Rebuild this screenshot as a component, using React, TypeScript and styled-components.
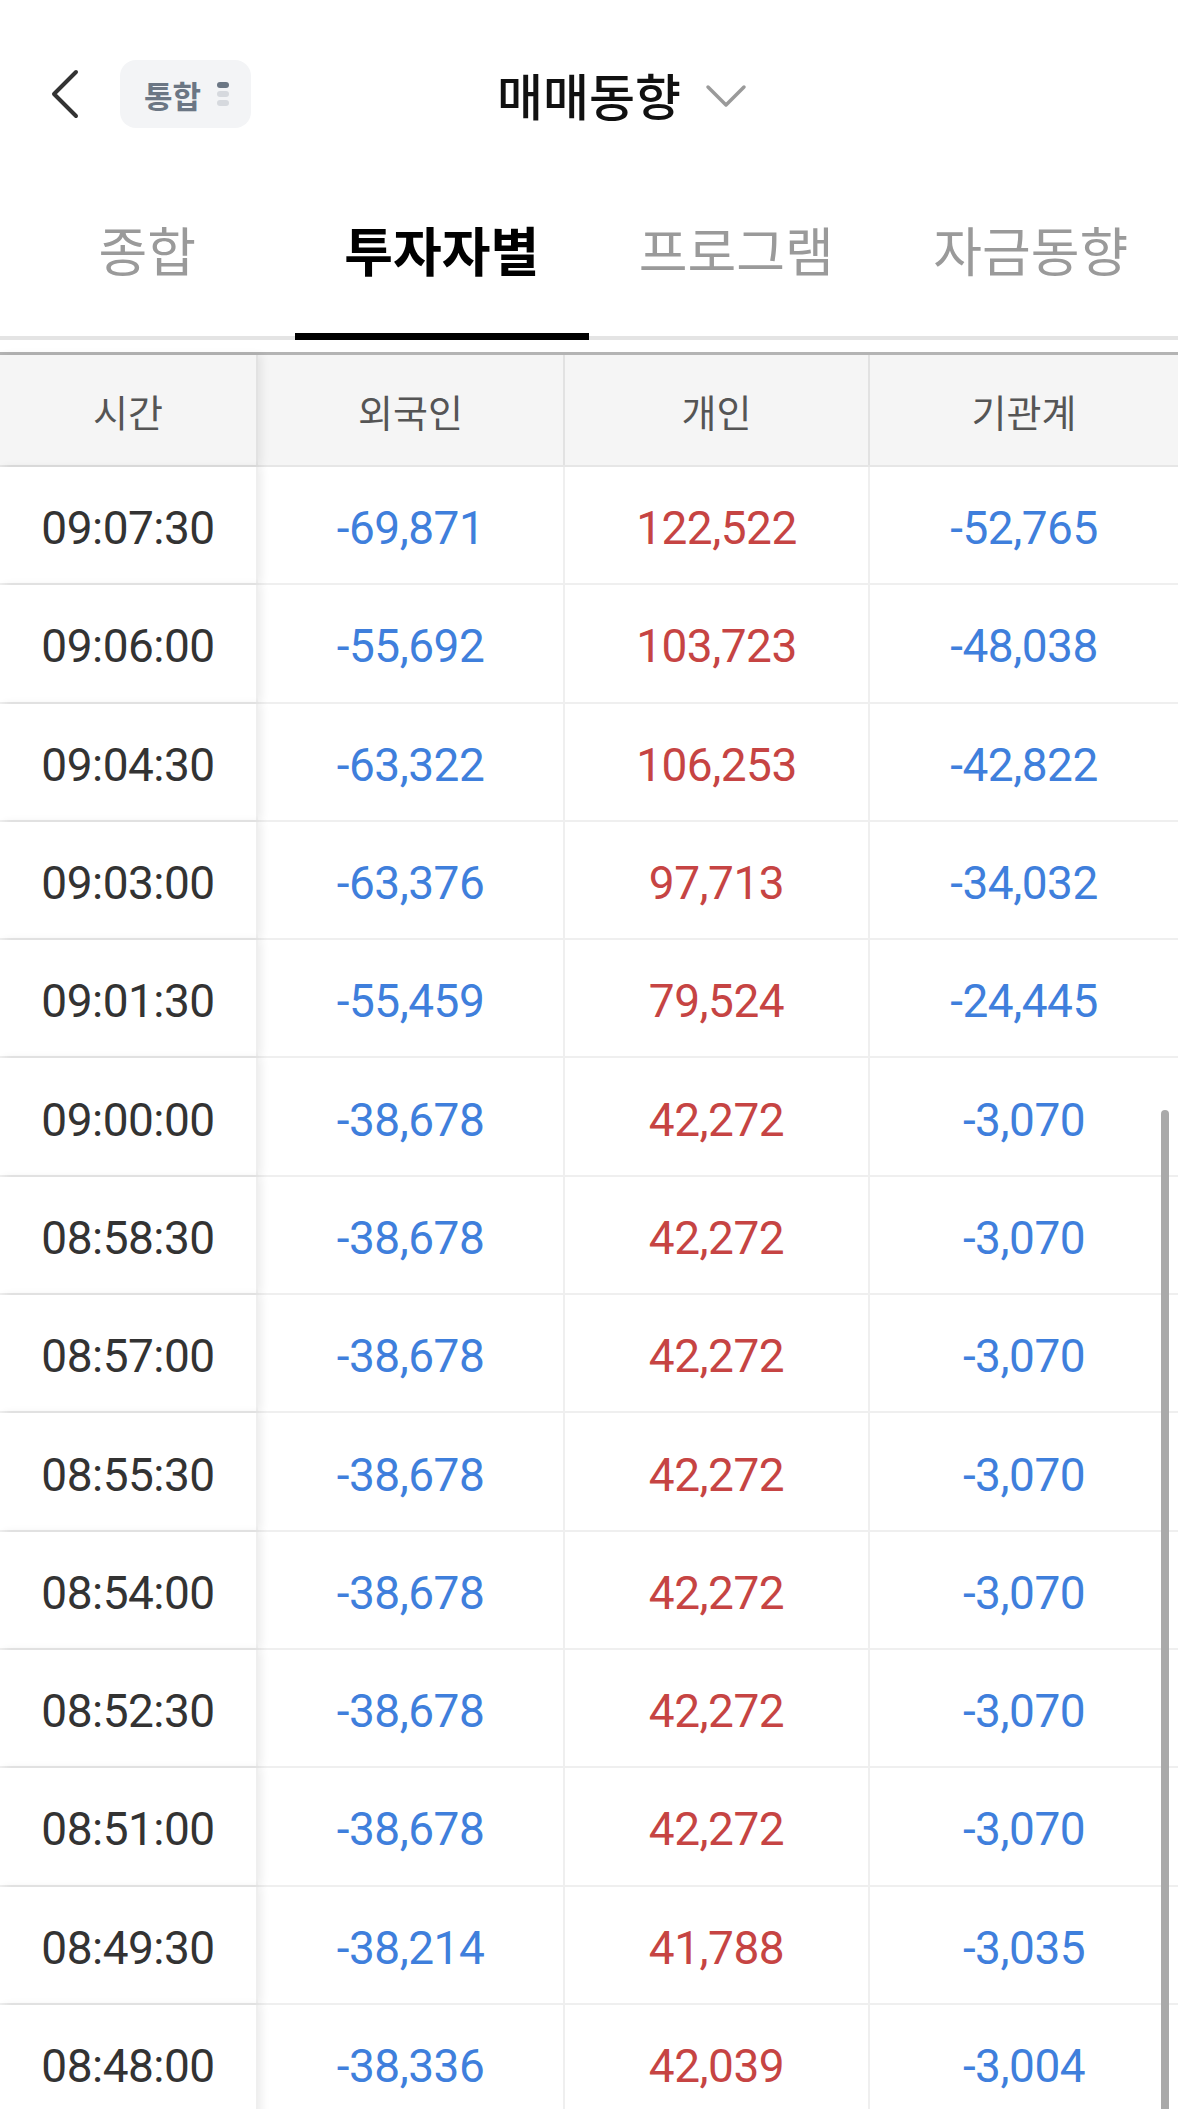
import styled, { createGlobalStyle } from "styled-components";

type Row = {
  time: string;
  foreign: string;
  personal: string;
  institution: string;
};

const rows: Row[] = [
  { time: "09:07:30", foreign: "-69,871", personal: "122,522", institution: "-52,765" },
  { time: "09:06:00", foreign: "-55,692", personal: "103,723", institution: "-48,038" },
  { time: "09:04:30", foreign: "-63,322", personal: "106,253", institution: "-42,822" },
  { time: "09:03:00", foreign: "-63,376", personal: "97,713", institution: "-34,032" },
  { time: "09:01:30", foreign: "-55,459", personal: "79,524", institution: "-24,445" },
  { time: "09:00:00", foreign: "-38,678", personal: "42,272", institution: "-3,070" },
  { time: "08:58:30", foreign: "-38,678", personal: "42,272", institution: "-3,070" },
  { time: "08:57:00", foreign: "-38,678", personal: "42,272", institution: "-3,070" },
  { time: "08:55:30", foreign: "-38,678", personal: "42,272", institution: "-3,070" },
  { time: "08:54:00", foreign: "-38,678", personal: "42,272", institution: "-3,070" },
  { time: "08:52:30", foreign: "-38,678", personal: "42,272", institution: "-3,070" },
  { time: "08:51:00", foreign: "-38,678", personal: "42,272", institution: "-3,070" },
  { time: "08:49:30", foreign: "-38,214", personal: "41,788", institution: "-3,035" },
  { time: "08:48:00", foreign: "-38,336", personal: "42,039", institution: "-3,004" },
];

const tabs = ["종합", "투자자별", "프로그램", "자금동향"];
const columns = ["시간", "외국인", "개인", "기관계"];

const tone = (value: string) => (value.startsWith("-") ? "down" : "up");

export default function App() {
  return (
    <>
      <GlobalStyle />
      <Page>
        <Header>
          <HeaderLeft>
            <BackButton aria-label="뒤로">
              <svg width="30" height="50" viewBox="0 0 30 50">
                <path
                  d="M26 3 L4 25 L26 47"
                  fill="none"
                  stroke="#333"
                  strokeWidth="4"
                  strokeLinecap="round"
                  strokeLinejoin="round"
                />
              </svg>
            </BackButton>
            <Chip>
              통합
              <Dots>
                <Dot $on />
                <Dot />
                <Dot />
              </Dots>
            </Chip>
          </HeaderLeft>
          <Title>매매동향</Title>
          <HeaderRight>
            <svg width="42" height="26" viewBox="0 0 42 26">
              <path
                d="M3 4 L21 22 L39 4"
                fill="none"
                stroke="#9a9a9a"
                strokeWidth="3.5"
                strokeLinecap="round"
                strokeLinejoin="round"
              />
            </svg>
          </HeaderRight>
        </Header>

        <TabBar>
          {tabs.map((tab, i) => (
            <Tab key={tab} $active={i === 1}>
              {tab}
            </Tab>
          ))}
        </TabBar>

        <Table>
          <HeadRow>
            {columns.map((col, i) => (
              <HeadCell key={col} $frozen={i === 0}>
                {col}
              </HeadCell>
            ))}
          </HeadRow>
          {rows.map((row) => (
            <BodyRow key={row.time}>
              <TimeCell>{row.time}</TimeCell>
              <ValueCell $tone={tone(row.foreign)}>{row.foreign}</ValueCell>
              <ValueCell $tone={tone(row.personal)}>{row.personal}</ValueCell>
              <ValueCell $tone={tone(row.institution)}>{row.institution}</ValueCell>
            </BodyRow>
          ))}
        </Table>

        <ScrollThumb />
      </Page>
    </>
  );
}

const GlobalStyle = createGlobalStyle`
  *, *::before, *::after {
    box-sizing: border-box;
  }
  html, body {
    margin: 0;
    padding: 0;
    background: #fff;
    overflow: hidden;
  }
  body {
    font-family: "Noto Sans CJK KR", "Noto Sans", sans-serif;
  }
`;

const Page = styled.div`
  position: relative;
  width: 1178px;
  height: 2109px;
  overflow: hidden;
  background: #fff;
`;

const Header = styled.header`
  display: grid;
  grid-template-columns: 1fr auto 1fr;
  align-items: center;
  height: 188px;
`;

const HeaderLeft = styled.div`
  display: flex;
  align-items: center;
  gap: 40px;
  padding-left: 50px;
`;

const BackButton = styled.button`
  display: flex;
  align-items: center;
  padding: 0;
  border: 0;
  background: none;
`;

const Chip = styled.div`
  display: flex;
  align-items: center;
  gap: 16px;
  height: 68px;
  padding: 0 22px 0 24px;
  border-radius: 16px;
  background: #f3f4f6;
  color: #6b7684;
  font-size: 31px;
  font-weight: 700;
`;

const Dots = styled.div`
  display: flex;
  flex-direction: column;
  gap: 3px;
`;

const Dot = styled.span<{ $on?: boolean }>`
  width: 12px;
  height: 6px;
  border-radius: 3px;
  background: ${(p) => (p.$on ? "#6b7684" : "#d6d9de")};
`;

const Title = styled.h1`
  margin: 0;
  font-size: 50px;
  font-weight: 500;
  color: #111;
`;

const HeaderRight = styled.div`
  display: flex;
  align-items: center;
  padding-left: 24px;
  padding-top: 4px;
`;

const TabBar = styled.nav`
  display: grid;
  grid-template-columns: repeat(4, 1fr);
  height: 152px;
  border-bottom: 4px solid #e4e4e4;
`;

const Tab = styled.div<{ $active?: boolean }>`
  position: relative;
  display: flex;
  align-items: center;
  justify-content: center;
  padding-bottom: 26px;
  font-size: 53px;
  font-weight: ${(p) => (p.$active ? 700 : 400)};
  color: ${(p) => (p.$active ? "#000" : "#9a9a9a")};

  &::after {
    content: "";
    position: absolute;
    left: 0;
    right: 0;
    bottom: -4px;
    height: 7px;
    background: ${(p) => (p.$active ? "#000" : "transparent")};
  }
`;

const Table = styled.div`
  margin-top: 12px;
  border-top: 3px solid #b4b4b4;
`;

const Grid = styled.div`
  display: grid;
  grid-template-columns: 258px 307px 305px 1fr;
`;

const HeadRow = styled(Grid)`
  height: 112px;
  background: #f5f5f5;
  border-bottom: 2px solid #e6e6e6;
`;

const HeadCell = styled.div<{ $frozen?: boolean }>`
  position: relative;
  z-index: ${(p) => (p.$frozen ? 1 : 0)};
  display: flex;
  align-items: center;
  justify-content: center;
  background: #f5f5f5;
  border-right: 2px solid #e2e2e2;
  box-shadow: ${(p) => (p.$frozen ? "4px 0 8px rgba(0, 0, 0, 0.07)" : "none")};
  font-size: 38px;
  color: #555;

  &:last-child {
    border-right: 0;
  }
`;

const BodyRow = styled(Grid)`
  height: 118.3px;
  border-bottom: 2px solid #efefef;
`;

const Cell = styled.div`
  display: flex;
  align-items: center;
  justify-content: center;
  padding-top: 6px;
  background: #fff;
  border-right: 2px solid #efefef;
  font-family: Roboto, "Liberation Sans", sans-serif;
  font-size: 46px;
  letter-spacing: -0.5px;

  &:last-child {
    border-right: 0;
  }
`;

const TimeCell = styled(Cell)`
  position: relative;
  z-index: 1;
  color: #333;
  box-shadow: 4px 0 8px rgba(0, 0, 0, 0.07);
`;

const ValueCell = styled(Cell)<{ $tone: "up" | "down" }>`
  color: ${(p) => (p.$tone === "up" ? "#c64443" : "#3f7fdc")};
`;

const ScrollThumb = styled.div`
  position: absolute;
  top: 1110px;
  right: 9px;
  bottom: 0;
  width: 8px;
  border-radius: 4px 4px 0 0;
  background: #a9a9a9;
`;
